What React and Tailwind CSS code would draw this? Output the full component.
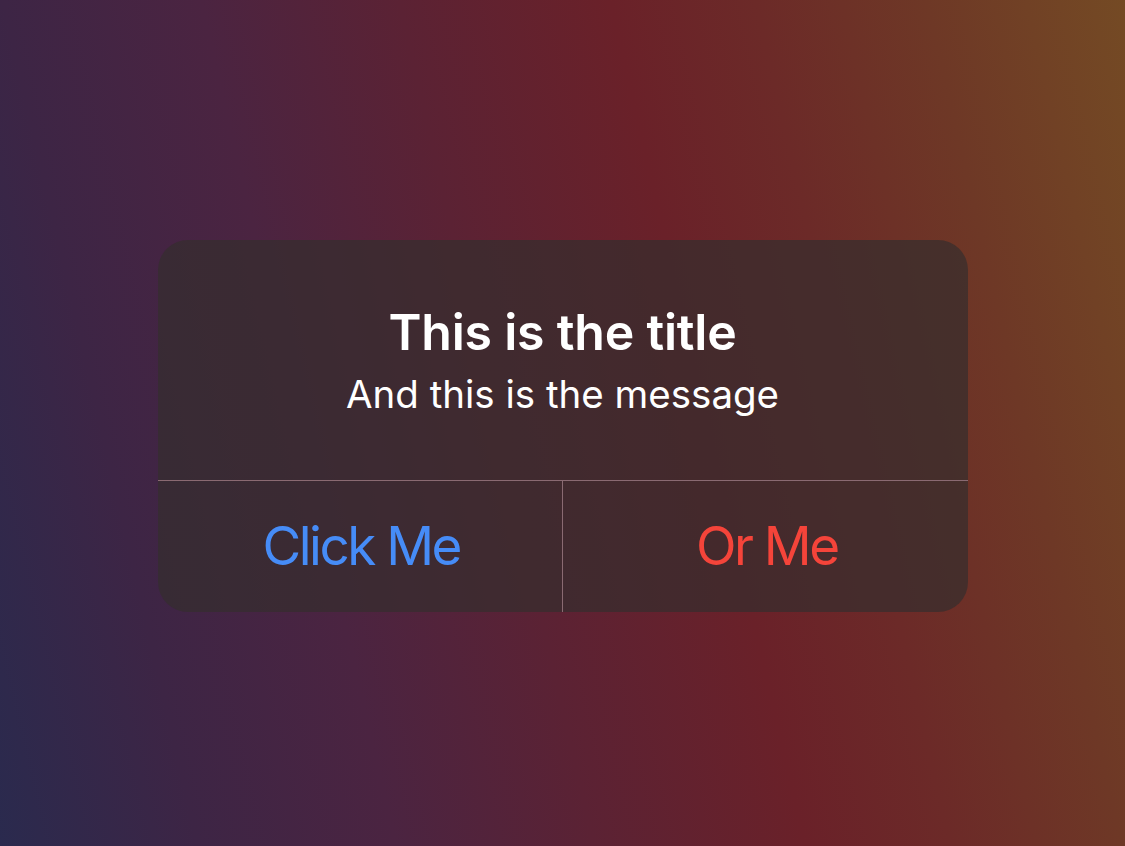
export default function App() {
  return (
    <div className="flex h-[846px] w-full items-center justify-center pt-[6px] bg-[linear-gradient(77deg,#2a2a4e_0%,#3d2545_15%,#4b2441_30%,#5b2234_45%,#6a2129_61%,#6c2a28_72%,#6e3826_85%,#744a24_100%)] font-['Inter',sans-serif]">
      <div className="flex w-[810px] flex-col overflow-hidden rounded-[30px] bg-[rgba(53,45,46,0.7)]">
        <div className="flex h-[240px] flex-col items-center justify-center text-white">
          <h1 className="text-[50px] font-semibold leading-[60px] tracking-[-0.2px]">This is the title</h1>
          <p className="mt-[8px] text-[38.5px] leading-[48px]">And this is the message</p>
        </div>
        <div className="h-px bg-[#8a6a72]" />
        <div className="flex h-[131px]">
          <button className="flex flex-1 items-center justify-center pl-[3px] text-[53px] leading-none tracking-[-2.5px] text-[#468cf7]">
            Click Me
          </button>
          <div className="w-px bg-[#8a6a72]" />
          <button className="flex flex-1 items-center justify-center pl-[3px] text-[53px] leading-none tracking-[-2.5px] text-[#f5443a]">
            Or Me
          </button>
        </div>
      </div>
    </div>
  );
}
